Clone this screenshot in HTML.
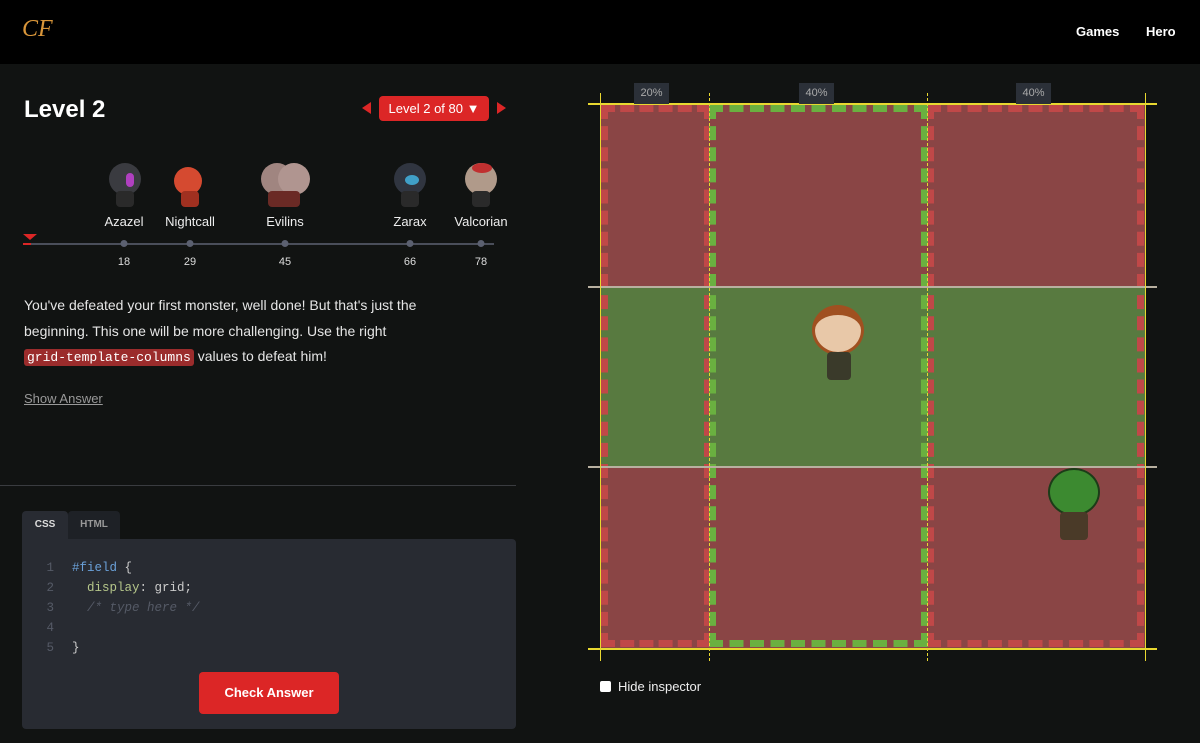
<!DOCTYPE html>
<html><head><meta charset="utf-8"><style>
*{margin:0;padding:0;box-sizing:border-box}
body{width:1200px;height:743px;background:#111312;font-family:"Liberation Sans",sans-serif;color:#ddd;position:relative;overflow:hidden}
.hdr{position:absolute;left:0;top:0;width:1200px;height:64px;background:#000}
.logo{position:absolute;left:22px;top:16px;font-family:"Liberation Serif",serif;font-style:italic;font-size:24px;color:#d9963a}
.nav{position:absolute;top:24px;font-size:13px;font-weight:bold;color:#fff}
h1{position:absolute;left:24px;top:96px;font-size:24px;color:#fff}
.lvl{position:absolute;left:379px;top:96px;width:110px;height:25px;background:#dc2626;border-radius:4px;color:#fff;font-size:13px;text-align:center;line-height:25px}
.tri{position:absolute;top:102px;width:0;height:0;border-top:6px solid transparent;border-bottom:6px solid transparent}
.mon{position:absolute;top:163px;width:36px;height:46px}
.mon .h{position:absolute;left:3px;top:0;width:32px;height:32px;border-radius:50%}
.mon .b{position:absolute;left:10px;top:28px;width:18px;height:16px;border-radius:4px;background:#2a2a2a}
.name{position:absolute;top:214px;font-size:13px;color:#eee;transform:translateX(-50%)}
.num{position:absolute;top:256px;font-size:11px;color:#ddd;transform:translateX(-50%)}
.dot{position:absolute;top:240px;width:7px;height:7px;border-radius:50%;background:#5b6070;transform:translateX(-50%)}
p.d{position:absolute;left:24px;top:293px;width:500px;font-size:14px;line-height:25.5px;color:#e5e5e5;white-space:nowrap}
code{font-family:"Liberation Mono",monospace;background:#9b2c2c;color:#fff;padding:1px 3px;border-radius:3px;font-size:13px}
.show{position:absolute;left:24px;top:391px;font-size:13px;color:#999;text-decoration:underline}
.ed{position:absolute;left:22px;top:539px;width:494px;height:190px;background:#282b32;border-radius:0 4px 4px 4px}
.tab{position:absolute;top:511px;height:28px;font-size:10px;font-weight:bold;line-height:28px;text-align:center;border-radius:4px 4px 0 0}
.code{position:absolute;font-family:"Liberation Mono",monospace;font-size:12.5px;line-height:20px}
.btn{position:absolute;left:199px;top:672px;width:140px;height:42px;background:#dc2626;border-radius:4px;color:#fff;font-size:13px;font-weight:bold;text-align:center;line-height:42px}
.cell{position:absolute}
.lab{position:absolute;top:83px;height:21px;width:35px;background:#2b3038;color:#aaa;font-size:11px;text-align:center;line-height:21px}
</style></head><body>
<div class="hdr"></div>
<div class="logo">CF</div>
<div class="nav" style="left:1076px">Games</div>
<div class="nav" style="left:1146px">Hero</div>

<h1>Level 2</h1>
<div class="tri" style="left:362px;border-right:9px solid #dc2626"></div>
<div class="lvl">Level 2 of 80 ▼</div>
<div class="tri" style="left:497px;border-left:9px solid #dc2626"></div>

<div class="mon" style="left:106px"><div class="h" style="background:#3a3b40"></div><div style="position:absolute;left:20px;top:10px;width:8px;height:14px;border-radius:4px;background:#b040c0"></div><div class="b"></div></div>
<div class="mon" style="left:171px"><div class="h" style="background:#d54a30;width:28px;height:28px;top:4px"></div><div class="b" style="background:#a03020"></div></div>
<div class="mon" style="left:258px;width:50px"><div class="h" style="background:#a08580"></div><div class="h" style="left:20px;background:#b09590"></div><div class="b" style="width:32px;background:#6a2a25"></div></div>
<div class="mon" style="left:391px"><div class="h" style="background:#303540"></div><div style="position:absolute;left:14px;top:12px;width:14px;height:10px;border-radius:50%;background:#40a0c8"></div><div class="b"></div></div>
<div class="mon" style="left:462px"><div class="h" style="background:#b09a8a"></div><div style="position:absolute;left:10px;top:0;width:20px;height:10px;border-radius:50%;background:#c03030"></div><div class="b"></div></div>

<div class="name" style="left:124px">Azazel</div>
<div class="name" style="left:190px">Nightcall</div>
<div class="name" style="left:285px">Evilins</div>
<div class="name" style="left:410px">Zarax</div>
<div class="name" style="left:481px">Valcorian</div>
<div style="position:absolute;left:23px;top:234px;border-left:7px solid transparent;border-right:7px solid transparent;border-top:6px solid #dc2626"></div>
<div style="position:absolute;left:23px;top:243px;width:471px;height:2px;background:#4a4e5a"></div>
<div style="position:absolute;left:23px;top:243px;width:8px;height:2px;background:#dc2626"></div>
<div class="dot" style="left:124px"></div><div class="dot" style="left:190px"></div><div class="dot" style="left:285px"></div><div class="dot" style="left:410px"></div><div class="dot" style="left:481px"></div>
<div class="num" style="left:124px">18</div><div class="num" style="left:190px">29</div><div class="num" style="left:285px">45</div><div class="num" style="left:410px">66</div><div class="num" style="left:481px">78</div>

<p class="d">You've defeated your first monster, well done! But that's just the<br>beginning. This one will be more challenging. Use the right<br><code>grid-template-columns</code> values to defeat him!</p>
<div class="show">Show Answer</div>
<div style="position:absolute;left:0;top:485px;width:516px;height:1px;background:#3a3c40"></div>

<div class="tab" style="left:22px;width:46px;background:#282b32;color:#ddd">CSS</div>
<div class="tab" style="left:68px;width:52px;background:#1e2126;color:#999">HTML</div>
<div class="ed"></div>
<div class="code" style="left:44px;top:558px;color:#555a66;text-align:right;width:10px">1<br>2<br>3<br>4<br>5</div>
<div class="code" style="left:72px;top:558px;color:#ccc;white-space:pre"><span style="color:#6aa0d8">#field</span> {
  <span style="color:#b5c68a">display</span>: grid;
  <i style="color:#555a66">/* type here */</i>

}</div>
<div class="btn">Check Answer</div>

<div class="cell" style="left:600px;top:104px;width:545px;height:182px;background:#8a4545"></div>
<div class="cell" style="left:600px;top:286px;width:545px;height:181px;background:#587a40"></div>
<div class="cell" style="left:600px;top:467px;width:545px;height:181px;background:#8a4545"></div>
<div class="cell" style="left:601px;top:105px;width:110px;height:542px;border:7px dashed #c04848"></div>
<div class="cell" style="left:927px;top:105px;width:217px;height:542px;border:7px dashed #c04848"></div>
<div class="cell" style="left:709px;top:105px;width:219px;height:542px;border:7px dashed #6ab040"></div>
<div class="cell" style="left:588px;top:103px;width:569px;height:2px;background:#e8d830"></div>
<div class="cell" style="left:588px;top:648px;width:569px;height:2px;background:#e8d830"></div>
<div class="cell" style="left:588px;top:286px;width:569px;height:2px;background:#b8b0a0"></div>
<div class="cell" style="left:588px;top:466px;width:569px;height:2px;background:#b8b0a0"></div>
<div class="cell" style="left:600px;top:93px;width:1px;height:568px;background:#e8d830"></div>
<div class="cell" style="left:1145px;top:93px;width:1px;height:568px;background:#e8d830"></div>
<div class="cell" style="left:709px;top:93px;width:0;height:568px;border-left:1px dashed #e8d830"></div>
<div class="cell" style="left:927px;top:93px;width:0;height:568px;border-left:1px dashed #e8d830"></div>
<div class="lab" style="left:634px">20%</div>
<div class="lab" style="left:799px">40%</div>
<div class="lab" style="left:1016px">40%</div>
<div class="cell" style="left:812px;top:305px;width:52px;height:50px;border-radius:50%;background:#e8c8a8;border:3px solid #a05020;border-top-width:10px"></div>
<div class="cell" style="left:827px;top:352px;width:24px;height:28px;border-radius:4px;background:#3a3a2a"></div>
<div class="cell" style="left:1048px;top:468px;width:52px;height:48px;border-radius:50%;background:#3c8a30;border:2px solid #1c3c18"></div>
<div class="cell" style="left:1060px;top:512px;width:28px;height:28px;border-radius:4px;background:#4a3a28"></div>

<div class="cell" style="left:600px;top:681px;width:11px;height:11px;background:#fff;border-radius:2px"></div>
<div class="cell" style="left:618px;top:679px;font-size:13px;color:#eee">Hide inspector</div>
</body></html>
